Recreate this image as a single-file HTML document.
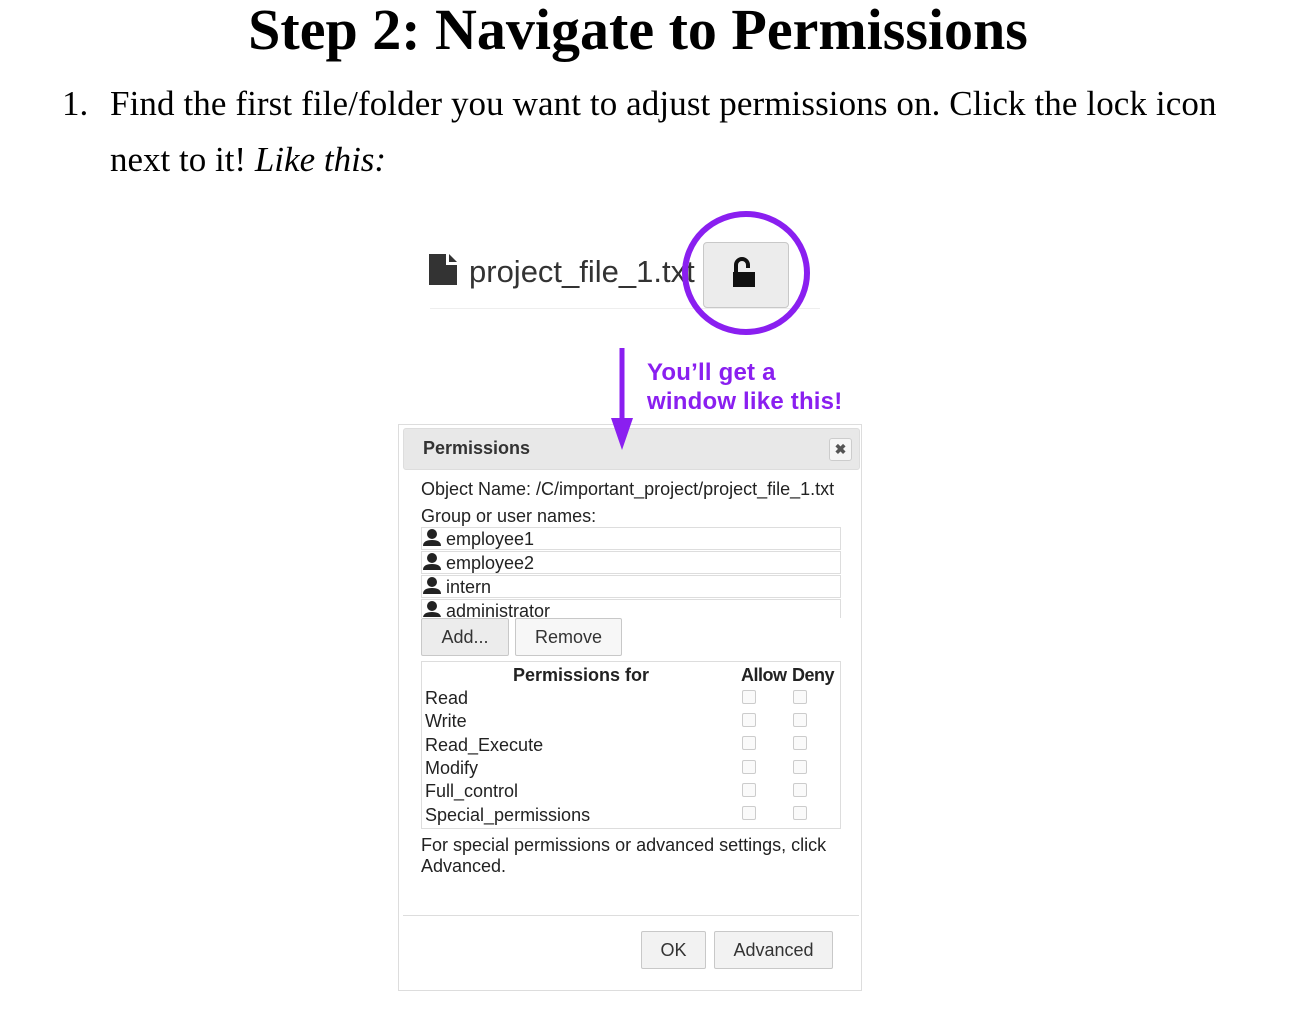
<!DOCTYPE html>
<html><head><meta charset="utf-8"><style>
body{margin:0;width:1298px;height:1010px;background:#fff;position:relative;overflow:hidden;font-family:"Liberation Sans",Arial,sans-serif;color:#222}
.a{position:absolute;white-space:nowrap}
.serif{font-family:"Liberation Serif",serif;color:#000}
.row{position:absolute;left:421px;width:418px;height:21px;border:1px solid #ddd;font-size:18px;line-height:22px;background:#fff}
.btn{position:absolute;background:#f2f2f2;border:1px solid #c8c8c8;border-radius:2px;font-size:18px;text-align:center;color:#333}
.cb{position:absolute;width:12px;height:12px;border:1px solid #ccc;border-radius:2px;background:#fafafa}
.p{position:absolute;left:425px;font-size:18px;line-height:20px}
</style></head><body>
<div class="a serif" style="left:0;width:1276px;text-align:center;top:-2px;font-size:58px;font-weight:bold;line-height:64px">Step 2: Navigate to Permissions</div>
<div class="a serif" style="left:62px;top:84px;font-size:35px;line-height:40px">1.</div>
<div class="a serif" style="left:110px;top:84px;font-size:35px;line-height:40px;letter-spacing:0.1px">Find the first file/folder you want to adjust permissions on. Click the lock icon</div>
<div class="a serif" style="left:110px;top:140px;font-size:35px;line-height:40px">next to it! <i>Like this:</i></div>

<svg class="a" style="left:429px;top:254px" width="29" height="32" viewBox="0 0 29 32"><path d="M0 0H17V11H28V31H0Z" fill="#333"/><path d="M20 0L28 8H20Z" fill="#333"/></svg>
<div class="a" style="left:430px;top:308px;width:390px;height:1px;background:#eee"></div>
<div class="btn" style="left:703px;top:242px;width:84px;height:64px;border-radius:4px;background:#ececec"></div>
<div class="a" style="left:469px;top:252px;font-size:31px;color:#333;line-height:40px">project_file_1.txt</div>
<svg class="a" style="left:732px;top:256px" width="26" height="32" viewBox="0 0 26 32"><path d="M4 17V9a6 6 0 0 1 12 0v3" fill="none" stroke="#111" stroke-width="4"/><rect x="1" y="16" width="22" height="15" fill="#111"/></svg>
<svg class="a" style="left:680px;top:210px" width="134" height="128"><ellipse cx="66" cy="63" rx="61" ry="59" fill="none" stroke="#8a1ff0" stroke-width="6"/></svg>

<div class="a" style="left:647px;top:358px;font-size:24px;font-weight:bold;color:#8a1ff0;line-height:29px;letter-spacing:0.2px">You’ll get a<br>window like this!</div>

<div class="a" style="left:398px;top:424px;width:462px;height:565px;border:1px solid #ddd"></div>
<div class="a" style="left:403px;top:428px;width:455px;height:40px;background:#e8e8e8;border:1px solid #ddd;border-radius:3px"></div>
<div class="a" style="left:423px;top:438px;font-size:18px;font-weight:bold;color:#333">Permissions</div>
<div class="a" style="left:829px;top:438px;width:21px;height:21px;border:1px solid #ccc;border-radius:3px;background:#f6f6f6;text-align:center;font-size:14px;line-height:21px;color:#555;font-weight:bold">✖</div>
<svg class="a" style="left:610px;top:348px" width="24" height="104"><line x1="12" y1="0" x2="12" y2="75" stroke="#8a1ff0" stroke-width="5"/><path d="M1 70H23L12 102Z" fill="#8a1ff0"/></svg>

<div class="a" style="left:421px;top:479px;font-size:18px;line-height:20px">Object Name: /C/important_project/project_file_1.txt</div>
<div class="a" style="left:421px;top:506px;font-size:18px;line-height:20px">Group or user names:</div>
<div class="row" style="top:527px"><span style="margin-left:24px">employee1</span></div>
<div class="row" style="top:551px"><span style="margin-left:24px">employee2</span></div>
<div class="row" style="top:575px"><span style="margin-left:24px">intern</span></div>
<div class="row" style="top:599px;height:18px;overflow:hidden;border-bottom:none"><span style="margin-left:24px">administrator</span></div>
<svg class="a" style="left:422px;top:529px" width="20" height="88" viewBox="0 0 20 88"><g fill="#222"><circle cx="10" cy="5" r="5"/><path d="M1 17q0-6 9-6t9 6z"/><circle cx="10" cy="29" r="5"/><path d="M1 41q0-6 9-6t9 6z"/><circle cx="10" cy="53" r="5"/><path d="M1 65q0-6 9-6t9 6z"/><circle cx="10" cy="77" r="5"/><path d="M1 89q0-6 9-6t9 6z"/></g></svg>

<div class="btn" style="left:421px;top:618px;width:86px;height:36px;line-height:36px;background:#ececec">Add...</div>
<div class="btn" style="left:515px;top:618px;width:105px;height:36px;line-height:36px;background:#f7f7f7">Remove</div>

<div class="a" style="left:421px;top:661px;width:418px;height:166px;border:1px solid #ddd"></div>
<div class="a" style="left:513px;top:665px;font-size:18px;font-weight:bold;color:#222">Permissions for</div>
<div class="a" style="left:741px;top:665px;font-size:18px;font-weight:bold;color:#222;letter-spacing:-0.5px">Allow</div>
<div class="a" style="left:792px;top:665px;font-size:18px;font-weight:bold;color:#222;letter-spacing:-0.5px">Deny</div>
<div class="p" style="top:688px">Read</div>
<div class="p" style="top:711px">Write</div>
<div class="p" style="top:735px">Read_Execute</div>
<div class="p" style="top:758px">Modify</div>
<div class="p" style="top:781px">Full_control</div>
<div class="p" style="top:805px">Special_permissions</div>
<div class="cb" style="left:742px;top:690px"></div><div class="cb" style="left:793px;top:690px"></div>
<div class="cb" style="left:742px;top:713px"></div><div class="cb" style="left:793px;top:713px"></div>
<div class="cb" style="left:742px;top:736px"></div><div class="cb" style="left:793px;top:736px"></div>
<div class="cb" style="left:742px;top:760px"></div><div class="cb" style="left:793px;top:760px"></div>
<div class="cb" style="left:742px;top:783px"></div><div class="cb" style="left:793px;top:783px"></div>
<div class="cb" style="left:742px;top:806px"></div><div class="cb" style="left:793px;top:806px"></div>

<div class="a" style="left:421px;top:835px;font-size:18px;line-height:21px">For special permissions or advanced settings, click<br>Advanced.</div>
<div class="a" style="left:403px;top:915px;width:456px;height:1px;background:#ddd"></div>
<div class="btn" style="left:641px;top:931px;width:63px;height:36px;line-height:36px">OK</div>
<div class="btn" style="left:714px;top:931px;width:117px;height:36px;line-height:36px">Advanced</div>
</body></html>
